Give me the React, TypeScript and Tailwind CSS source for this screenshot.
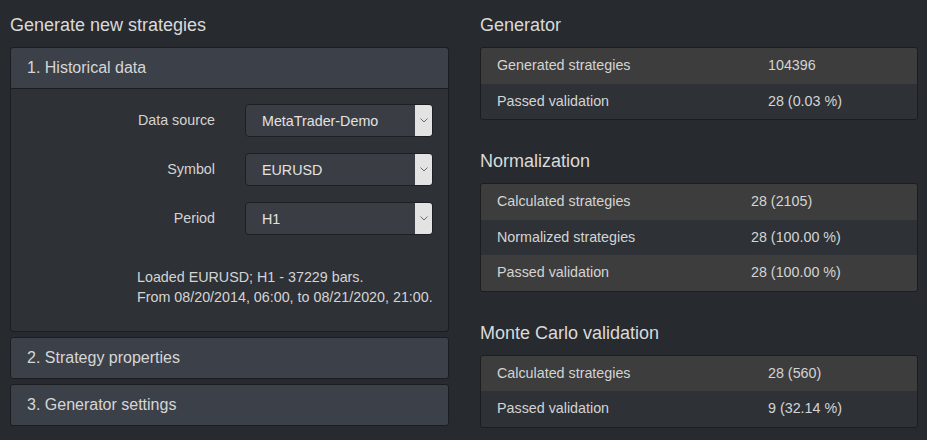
const font = { fontFamily: '"Liberation Sans", Arial, sans-serif' };

type Row = { label: string; value: string };

const sections: { title: string; labelWidth: string; rows: Row[] }[] = [
  {
    title: 'Generator',
    labelWidth: 'w-[271px]',
    rows: [
      { label: 'Generated strategies', value: '104396' },
      { label: 'Passed validation', value: '28 (0.03 %)' },
    ],
  },
  {
    title: 'Normalization',
    labelWidth: 'w-[254px]',
    rows: [
      { label: 'Calculated strategies', value: '28 (2105)' },
      { label: 'Normalized strategies', value: '28 (100.00 %)' },
      { label: 'Passed validation', value: '28 (100.00 %)' },
    ],
  },
  {
    title: 'Monte Carlo validation',
    labelWidth: 'w-[271px]',
    rows: [
      { label: 'Calculated strategies', value: '28 (560)' },
      { label: 'Passed validation', value: '9 (32.14 %)' },
    ],
  },
];

/** 셀렉트 박스 */
function SelectBox({ value }: { value: string }) {
  return (
    <div className="flex w-[188px] h-[33px] rounded-[4px] border border-[#1d1f22] bg-[#3a3e44]">
      <span className="flex-1 pl-4 text-[14.3px] leading-[32px] text-[#e2e2e2]">{value}</span>
      <span className="flex w-[17px] items-center justify-center rounded-r-[3px] bg-[#e3e3e3]">
        <svg width="8" height="5" viewBox="0 0 8 5" fill="none">
          <path d="M0.5 0.5 L4 4 L7.5 0.5" stroke="#6b6b6b" strokeWidth="1" />
        </svg>
      </span>
    </div>
  );
}

function CollapsedCard({ title }: { title: string }) {
  return (
    <div className="h-[42px] rounded-[3px] border border-[#1b1d20] bg-[#3c4149] pl-4 text-[16px] leading-[40px] text-[#d6d6d6]">
      {title}
    </div>
  );
}

export default function App() {
  const fields = [
    { label: 'Data source', value: 'MetaTrader-Demo' },
    { label: 'Symbol', value: 'EURUSD' },
    { label: 'Period', value: 'H1' },
  ];

  return (
    <div
      className="w-[927px] h-[440px] bg-[#272a2e] pl-[10px] grid grid-cols-[439px_438px] gap-x-[31px]"
      style={font}
    >
      {/* 왼쪽: 전략 생성 */}
      <div className="flex flex-col">
        <h2 className="mt-[14px] mb-[11px] text-[18px] leading-[22px] text-[#dadada]">
          Generate new strategies
        </h2>
        <div className="rounded-[3px] border border-[#1b1d20] bg-[#2e3136]">
          <div className="h-[41px] border-b border-[#1b1d20] bg-[#3c4149] pl-4 text-[16px] leading-[40px] text-[#d6d6d6] rounded-t-[3px]">
            1. Historical data
          </div>
          <div className="pt-[15px] pb-[24px]">
            <div className="flex flex-col gap-[16px]">
              {fields.map((f) => (
                <div key={f.label} className="flex items-center gap-[30px]">
                  <span className="w-[204px] text-right text-[14.3px] text-[#d4d4d4]">{f.label}</span>
                  <SelectBox value={f.value} />
                </div>
              ))}
            </div>
            <div className="mt-[32px] ml-[126px] text-[14.3px] leading-[20px] text-[#d4d4d4]">
              <p>Loaded EURUSD; H1 - 37229 bars.</p>
              <p>From 08/20/2014, 06:00, to 08/21/2020, 21:00.</p>
            </div>
          </div>
        </div>
        <div className="mt-[5px] flex flex-col gap-[5px]">
          <CollapsedCard title="2. Strategy properties" />
          <CollapsedCard title="3. Generator settings" />
        </div>
      </div>

      {/* 오른쪽: 결과 */}
      <div className="flex flex-col">
        {sections.map((s, i) => (
          <div key={s.title} className={i === 0 ? '' : 'mt-[30px]'}>
            <h2
              className={`${i === 0 ? 'mt-[14px]' : ''} mb-[11px] text-[18px] leading-[22px] text-[#dadada]`}
            >
              {s.title}
            </h2>
            <div className="overflow-hidden rounded-[3px] border border-[#1b1d20]">
              {s.rows.map((r, j) => (
                <div
                  key={r.label}
                  className={`flex h-[35.5px] items-center pl-4 text-[14.3px] text-[#d4d4d4] ${
                    j % 2 === 0 ? 'bg-[#3d3d3d]' : 'bg-[#2e3237]'
                  }`}
                >
                  <span className={s.labelWidth}>{r.label}</span>
                  <span>{r.value}</span>
                </div>
              ))}
            </div>
          </div>
        ))}
      </div>
    </div>
  );
}
